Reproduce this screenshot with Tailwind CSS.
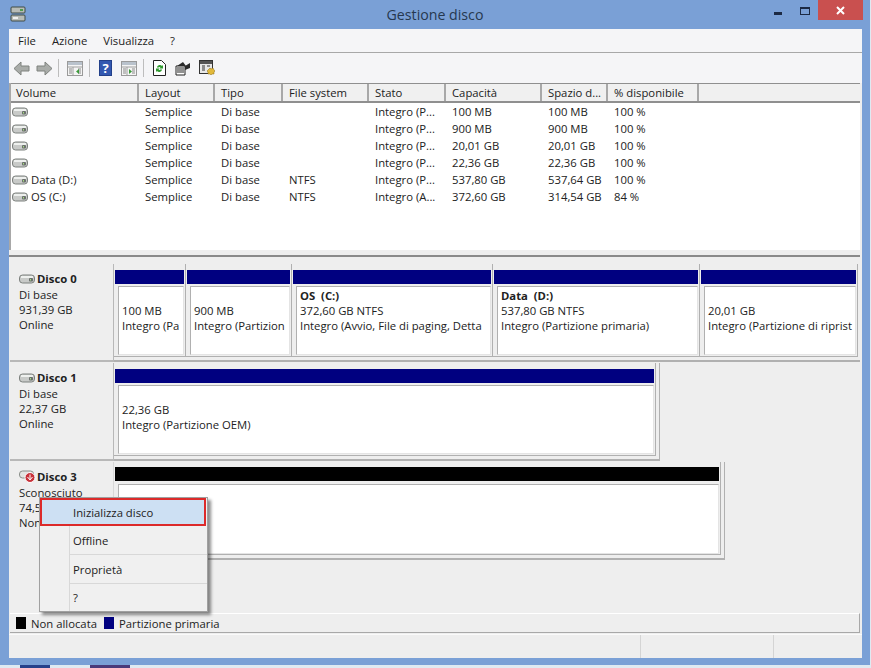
<!DOCTYPE html>
<html lang="it">
<head>
    <meta charset="UTF-8">
    <title>Gestione disco</title>
    <script src="https://cdn.jsdelivr.net/npm/@tailwindcss/browser@4"></script>
</head>
<body class="bg-[#dfeaf2] font-['Open_Sans','Noto_Sans',sans-serif] text-[11.3px] leading-[15px] text-[#222]">
    <svg class="hidden">
        <symbol id="hdd" viewBox="0 0 16 10">
            <rect x="0.5" y="1" width="15" height="8" rx="3" fill="#c8cac8" stroke="#7d817e"/>
            <rect x="2" y="2" width="12" height="2" fill="#eef0ee"/>
            <rect x="10" y="4" width="4" height="3.5" rx="1" fill="#6b716d"/>
            <rect x="11" y="5" width="1" height="1.5" fill="#a8e080"/>
        </symbol>
        <symbol id="panes" viewBox="0 0 16 15">
            <rect x="0.5" y="0.5" width="15" height="14" fill="#f4f4f4" stroke="#9a9a9a"/>
            <rect x="1" y="1" width="14" height="3" fill="#b9c2cc"/>
            <path d="M1 6h14M6 6v8" stroke="#a0a0a0" fill="none"/>
            <path d="M2 8h3M2 10h3M2 12h3M11 8h3M11 10h3M11 12h3" stroke="#8a8a8a" fill="none"/>
        </symbol>
    </svg>

    <!-- finestra -->
    <div class="w-[870px] h-[665px] bg-[#7aa0d6] flex flex-col">
        <!-- barra del titolo -->
        <div class="h-[29px] shrink-0 flex items-start relative pl-[10px]">
            <svg class="w-[16px] h-[16px] mt-[6px]" viewBox="0 0 16 16">
                <rect x="1" y="1" width="14" height="6" rx="1" fill="#b8bcb8" stroke="#3f4a44"/>
                <rect x="1" y="9" width="14" height="6" rx="1" fill="#b8bcb8" stroke="#3f4a44"/>
                <rect x="10" y="3" width="3" height="2" fill="#4f9a4f"/>
                <rect x="3" y="11" width="5" height="2" fill="#f0f0f0"/>
            </svg>
            <div class="flex-1 text-center text-[14.2px] leading-[18px] mt-[6px] pl-[70px] text-[#26384f]">Gestione disco</div>
            <div class="w-[8px] h-[3px] bg-[#1c2a44] mt-[12px]"></div>
            <div class="w-[10px] h-[8px] border border-t-2 border-[#1c2a44] mt-[7px] ml-[18px]"></div>
            <div class="w-[45px] h-[20px] bg-[#c9504f] ml-[8px] mr-[7px] flex items-center justify-center">
                <svg class="w-[9px] h-[9px]" viewBox="0 0 9 9"><path d="M1 1l7 7M8 1l-7 7" stroke="#fff" stroke-width="2"/></svg>
            </div>
        </div>

        <!-- area client -->
        <div class="ml-[9px] w-[853px] h-[629px] bg-[#eeeeee] flex flex-col">
            <!-- menu -->
            <div class="h-[24px] shrink-0 bg-[#f5f5f7] border-b border-[#a8a8a8] flex items-center pl-[9px] gap-[16px] pb-[1px]">
                <span>File</span><span>Azione</span><span>Visualizza</span><span>?</span>
            </div>
            <!-- toolbar -->
            <div class="h-[30px] shrink-0 bg-[#f5f5f7] flex items-center pl-[4px]">
                <svg class="w-[17px] h-[15px]" viewBox="0 0 17 15"><path d="M1 7.5L8 1v4h8v5H8v4z" fill="#a9aca9" stroke="#7f827f"/></svg>
                <svg class="w-[17px] h-[15px] ml-[6px]" viewBox="0 0 17 15"><path d="M16 7.5L9 1v4H1v5h8v4z" fill="#a9aca9" stroke="#7f827f"/></svg>
                <div class="w-px h-[18px] bg-[#bdbdbd] ml-[5px]"></div>
                <svg class="w-[16px] h-[15px] ml-[8px]"><use href="#panes"/><path d="M12 8v5l-3-2.5z" fill="#3a9a3a"/></svg>
                <div class="w-px h-[18px] bg-[#bdbdbd] ml-[6px]"></div>
                <div class="w-[13px] h-[16px] bg-[#3358b0] border border-[#23408a] ml-[9px] text-white text-[13px] leading-[14px] text-center font-bold">?</div>
                <svg class="w-[16px] h-[15px] ml-[9px]"><use href="#panes"/><path d="M8 8v5l3-2.5z" fill="#3a9a3a"/></svg>
                <div class="w-px h-[18px] bg-[#bdbdbd] ml-[6px]"></div>
                <svg class="w-[13px] h-[16px] ml-[9px]" viewBox="0 0 13 16">
                    <path d="M.5.5h8l4 4v11H.5z" fill="#fff" stroke="#222"/>
                    <path d="M4 7a3 3 0 0 1 5-1l1-1v3.500H6.500l1-1a1.700 1.700 0 0 0-2.500.5zM9 10a3 3 0 0 1-5 1l-1 1V8.500h3.500l-1 1a1.700 1.700 0 0 0 2.500-.5z" fill="#2f9a2f"/>
                </svg>
                <svg class="w-[16px] h-[15px] ml-[9px]" viewBox="0 0 16 15">
                    <path d="M1 5h9v9H1z" fill="#fff" stroke="#222"/>
                    <path d="M2 7h7M2 9h7M2 11h7" stroke="#222"/>
                    <path d="M2 5l6-4 3 4zM10 5l5-3v5l-5 2z" fill="#2a2a2a"/>
                </svg>
                <svg class="w-[17px] h-[16px] ml-[8px]" viewBox="0 0 17 16">
                    <rect x="0.500" y="0.500" width="13" height="13" fill="#e8e8e8" stroke="#333"/>
                    <rect x="1" y="1" width="12" height="3" fill="#555"/>
                    <path d="M3 6h3M3 8h3M3 10h3M8 6h3" stroke="#333"/>
                    <path d="M11 8l1 1 2-1 1 2 1 1-1 1 0 2-2 0-1 1-1-1-2 0 0-2-1-1 1-1z" fill="#e2b93a" stroke="#8a6a10" stroke-width="0.500"/>
                </svg>
            </div>

            <!-- elenco volumi -->
            <div class="mr-[2px] h-[167px] shrink-0 bg-white border-l-2 border-[#a8a8a8] flex flex-col">
                <div class="h-[20px] shrink-0 bg-[#f0f0f0] border-t border-b-2 border-[#8f8f8f] grid grid-cols-[128px_76px_68px_86px_77px_96px_66px_91px_1fr] items-center">
                    <div class="h-full pl-[5px] border-r-2 border-[#a8a8a8] leading-[17px]">Volume</div>
                    <div class="h-full pl-[6px] border-r-2 border-[#a8a8a8] leading-[17px]">Layout</div>
                    <div class="h-full pl-[6px] border-r-2 border-[#a8a8a8] leading-[17px]">Tipo</div>
                    <div class="h-full pl-[6px] border-r-2 border-[#a8a8a8] leading-[17px]">File system</div>
                    <div class="h-full pl-[6px] border-r-2 border-[#a8a8a8] leading-[17px]">Stato</div>
                    <div class="h-full pl-[6px] border-r-2 border-[#a8a8a8] leading-[17px]">Capacità</div>
                    <div class="h-full pl-[6px] border-r-2 border-[#a8a8a8] leading-[17px]">Spazio d...</div>
                    <div class="h-full pl-[6px] border-r-2 border-[#a8a8a8] leading-[17px]">% disponibile</div>
                    <div></div>
                </div>
                <div class="grid grid-cols-[128px_76px_68px_86px_77px_96px_66px_91px_1fr] auto-rows-[17px] items-center [&>div]:pl-[6px]">
                    <div class="!pl-[1px] flex items-center"><svg class="w-[16px] h-[10px]"><use href="#hdd"/></svg></div><div>Semplice</div><div>Di base</div><div></div><div>Integro (P...</div><div>100 MB</div><div>100 MB</div><div>100 %</div><div></div>
                    <div class="!pl-[1px] flex items-center"><svg class="w-[16px] h-[10px]"><use href="#hdd"/></svg></div><div>Semplice</div><div>Di base</div><div></div><div>Integro (P...</div><div>900 MB</div><div>900 MB</div><div>100 %</div><div></div>
                    <div class="!pl-[1px] flex items-center"><svg class="w-[16px] h-[10px]"><use href="#hdd"/></svg></div><div>Semplice</div><div>Di base</div><div></div><div>Integro (P...</div><div>20,01 GB</div><div>20,01 GB</div><div>100 %</div><div></div>
                    <div class="!pl-[1px] flex items-center"><svg class="w-[16px] h-[10px]"><use href="#hdd"/></svg></div><div>Semplice</div><div>Di base</div><div></div><div>Integro (P...</div><div>22,36 GB</div><div>22,36 GB</div><div>100 %</div><div></div>
                    <div class="!pl-[1px] flex items-center"><svg class="w-[16px] h-[10px] shrink-0"><use href="#hdd"/></svg><span class="ml-[3px]">Data (D:)</span></div><div>Semplice</div><div>Di base</div><div>NTFS</div><div>Integro (P...</div><div>537,80 GB</div><div>537,64 GB</div><div>100 %</div><div></div>
                    <div class="!pl-[1px] flex items-center"><svg class="w-[16px] h-[10px] shrink-0"><use href="#hdd"/></svg><span class="ml-[3px]">OS (C:)</span></div><div>Semplice</div><div>Di base</div><div>NTFS</div><div>Integro (A...</div><div>372,60 GB</div><div>314,54 GB</div><div>84 %</div><div></div>
                </div>
            </div>

            <!-- divisore -->
            <div class="h-[2px] shrink-0 mt-[5px] mr-[2px] bg-[#8a8a8a]"></div>

            <!-- dischi -->
            <div class="h-[356px] shrink-0 ml-px pt-[7px] flex flex-col gap-px">
                <!-- Disco 0 -->
                <div class="h-[98px] shrink-0 flex">
                    <div class="w-[104px] shrink-0 pl-[9px] pt-[7px] border-r border-b-2 border-[#b8b8b8]">
                        <div class="flex items-center font-bold mb-px"><svg class="w-[16px] h-[10px] mr-[2px]"><use href="#hdd"/></svg>Disco 0</div>
                        <div>Di base</div><div>931,39 GB</div><div>Online</div>
                    </div>
                    <div class="w-[746px] flex border-b-2 border-[#b0b0b0] h-[98px]">
                        <div class="w-[72px] h-[93px] pt-[6px] pl-px pr-px border-r border-b border-[#b0b0b0]">
                            <div class="h-[14px] bg-[#000080]"></div>
                            <div class="h-[69px] mt-[2px] ml-[3px] bg-white border-l border-t border-[#b0b0b0] border-r border-r-[#e4e4e4] border-b border-b-[#e4e4e4]"><div class="mx-[3px] pt-[1px] whitespace-nowrap"><div class="h-[15px]"></div><div>100 MB</div><div>Integro (Pa</div></div></div>
                        </div>
                        <div class="w-[106px] h-[93px] pt-[6px] pl-px pr-px border-r border-b border-[#b0b0b0]">
                            <div class="h-[14px] bg-[#000080]"></div>
                            <div class="h-[69px] mt-[2px] ml-[3px] bg-white border-l border-t border-[#b0b0b0] border-r border-r-[#e4e4e4] border-b border-b-[#e4e4e4]"><div class="mx-[3px] pt-[1px] whitespace-nowrap"><div class="h-[15px]"></div><div>900 MB</div><div>Integro (Partizion</div></div></div>
                        </div>
                        <div class="w-[201px] h-[93px] pt-[6px] pl-px pr-px border-r border-b border-[#b0b0b0]">
                            <div class="h-[14px] bg-[#000080]"></div>
                            <div class="h-[69px] mt-[2px] ml-[3px] bg-white border-l border-t border-[#b0b0b0] border-r border-r-[#e4e4e4] border-b border-b-[#e4e4e4]"><div class="mx-[3px] pt-[1px] whitespace-nowrap"><div class="h-[15px] font-bold">OS&nbsp; (C:)</div><div>372,60 GB NTFS</div><div>Integro (Avvio, File di paging, Detta</div></div></div>
                        </div>
                        <div class="w-[207px] h-[93px] pt-[6px] pl-px pr-px border-r border-b border-[#b0b0b0]">
                            <div class="h-[14px] bg-[#000080]"></div>
                            <div class="h-[69px] mt-[2px] ml-[3px] bg-white border-l border-t border-[#b0b0b0] border-r border-r-[#e4e4e4] border-b border-b-[#e4e4e4]"><div class="mx-[3px] pt-[1px] whitespace-nowrap"><div class="h-[15px] font-bold">Data&nbsp; (D:)</div><div>537,80 GB NTFS</div><div>Integro (Partizione primaria)</div></div></div>
                        </div>
                        <div class="w-[158px] h-[93px] pt-[6px] pl-px pr-px border-r border-b border-[#b0b0b0]">
                            <div class="h-[14px] bg-[#000080]"></div>
                            <div class="h-[69px] mt-[2px] ml-[3px] bg-white border-l border-t border-[#b0b0b0] border-r border-r-[#e4e4e4] border-b border-b-[#e4e4e4]"><div class="mx-[3px] pt-[1px] whitespace-nowrap"><div class="h-[15px]"></div><div>20,01 GB</div><div>Integro (Partizione di riprist</div></div></div>
                        </div>
                    </div>
                </div>
                <!-- Disco 1 -->
                <div class="h-[98px] shrink-0 flex">
                    <div class="w-[104px] shrink-0 pl-[9px] pt-[7px] border-r border-b-2 border-[#b8b8b8]">
                        <div class="flex items-center font-bold mb-px"><svg class="w-[16px] h-[10px] mr-[2px]"><use href="#hdd"/></svg>Disco 1</div>
                        <div>Di base</div><div>22,37 GB</div><div>Online</div>
                    </div>
                    <div class="w-[546px] h-[98px] border-r border-b-2 border-[#b0b0b0]">
                        <div class="w-[542px] h-[93px] pt-[6px] pl-px pr-px border-r border-b border-[#b0b0b0]">
                            <div class="h-[14px] bg-[#000080]"></div>
                            <div class="h-[69px] mt-[2px] ml-[3px] bg-white border-l border-t border-[#b0b0b0] border-r border-r-[#e4e4e4] border-b border-b-[#e4e4e4]"><div class="mx-[3px] pt-[1px] whitespace-nowrap"><div class="h-[15px]"></div><div>22,36 GB</div><div>Integro (Partizione OEM)</div></div></div>
                        </div>
                    </div>
                </div>
                <!-- Disco 3 -->
                <div class="h-[98px] shrink-0 flex">
                    <div class="w-[104px] shrink-0 pl-[9px] pt-[7px] border-r border-[#d8d8d8]">
                        <div class="flex items-center font-bold mb-px">
                            <svg class="w-[17px] h-[13px] mr-px" viewBox="0 0 17 13">
                                <rect x="0.500" y="1" width="14" height="7" rx="3" fill="#e2e4e2" stroke="#8a8e8a"/>
                                <circle cx="11" cy="7.500" r="5" fill="#c8323a" stroke="#fff"/>
                                <path d="M11 4.500v4.500M8.500 7l2.500 3 2.500-3" stroke="#fff" fill="none"/>
                            </svg>Disco 3
                        </div>
                        <div>Sconosciuto</div><div>74,53 GB</div><div>Non inizializzato</div>
                    </div>
                    <div class="w-[611px] h-[98px] border-r border-b-2 border-[#b0b0b0]">
                        <div class="w-[607px] h-[93px] pt-[5px] pl-px pr-px border-r border-b border-[#b0b0b0]">
                            <div class="h-[14px] bg-black"></div>
                            <div class="h-[70px] mt-[3px] ml-[3px] bg-white border-l border-t border-[#b0b0b0] border-r border-r-[#e4e4e4] border-b border-b-[#e4e4e4]"></div>
                        </div>
                    </div>
                </div>
            </div>

            <!-- legenda -->
            <div class="h-[20px] shrink-0 ml-px mr-[2px] border-t border-t-white border-r border-b border-[#a8a8a8] flex items-center pl-[6px]">
                <div class="w-[10px] h-[12px] bg-black"></div><span class="ml-[5px]">Non allocata</span>
                <div class="w-[10px] h-[12px] bg-[#000080] ml-[7px]"></div><span class="ml-[5px]">Partizione primaria</span>
            </div>

            <!-- barra di stato -->
            <div class="flex-1 mt-px border-t border-[#fafafa] flex">
                <div class="w-[632px] border-r border-[#d4d4d4]"></div>
                <div class="w-[133px] border-r border-[#d4d4d4]"></div>
            </div>
        </div>
    </div>
    <!-- scorcio del desktop -->
    <div class="w-[871px] h-[3px] flex">
        <div class="w-[20px]"></div><div class="w-[30px] bg-[#26408a]"></div>
        <div class="w-[40px]"></div><div class="w-[40px] bg-[#4a3a7a]"></div>
    </div>

    <!-- menu contestuale -->
    <div class="absolute left-[39px] top-[497px] w-[169px] h-[115px] bg-[#f0f0f0] border border-[#a0a0a0] shadow-[3px_3px_3px_rgba(0,0,0,0.45)] flex flex-col">
        <div class="h-[28px] mr-px bg-[#cde0f3] border-2 border-[#dc2a2a] flex items-center">
            <span class="ml-[31px]">Inizializza disco</span>
        </div>
        <div class="h-[29px] ml-[29px] border-b border-[#d8d8d8] border-l flex items-center pl-[3px]">Offline</div>
        <div class="h-[29px] ml-[29px] border-b border-[#d8d8d8] border-l flex items-center pl-[3px]">Proprietà</div>
        <div class="flex-1 ml-[29px] border-l border-[#d8d8d8] flex items-center pl-[3px]">?</div>
    </div>
</body>
</html>
